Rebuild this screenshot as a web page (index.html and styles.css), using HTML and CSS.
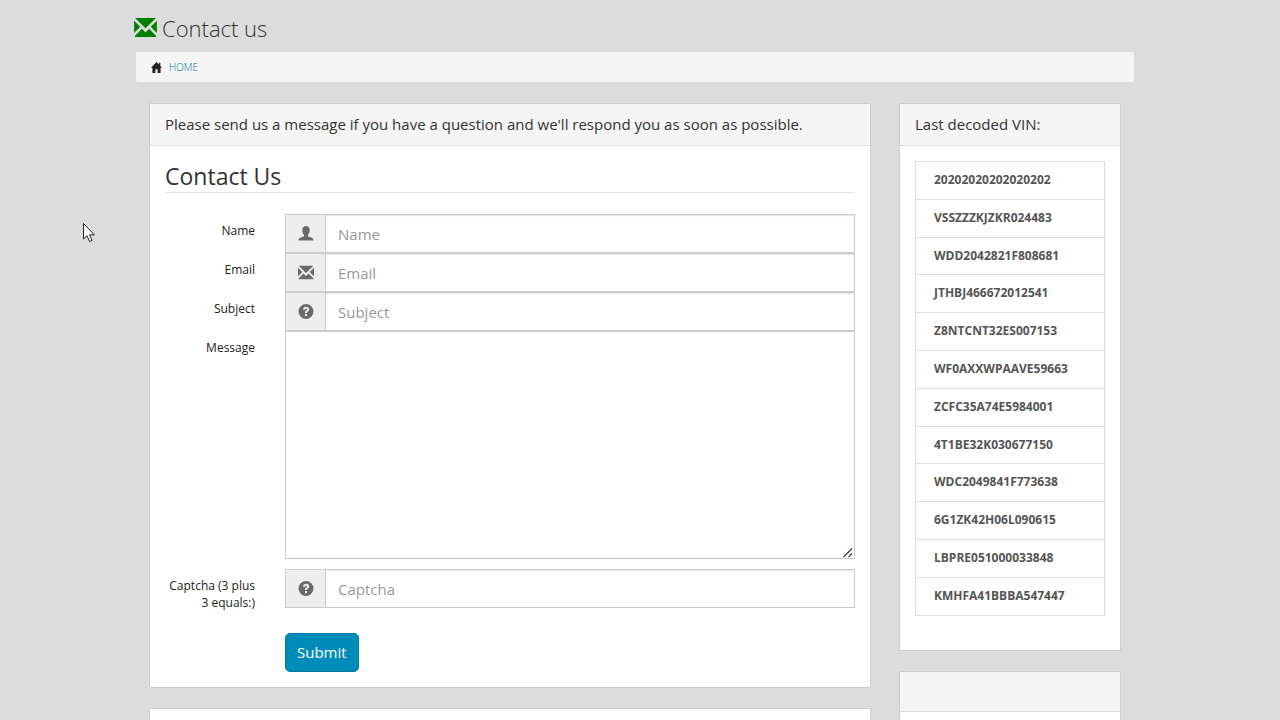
FILE: index.html
```html
<!DOCTYPE html>
<html lang="en">
<head>
<meta charset="utf-8">
<title>Contact us</title>
<link rel="stylesheet" href="styles.css">
</head>
<body>
<svg class="defs" aria-hidden="true">
  <symbol id="envelope" viewBox="0 0 24 20"><path d="M1 0H23L12 10.800zM0 2.800L6.500 9.300L0 15.800zM24 2.800V15.800L17.500 9.300zM8.200 11.400L12 15.200L15.800 11.400L23 18.600V20H1V18.600z"/></symbol>
  <symbol id="user" viewBox="0 0 16 16"><path d="M8 0C5.300 0 4 1.900 4 4.500C4 6.500 4.700 8.200 5.900 9.400V10.900L1.500 12.800C.4 13.300 0 14 0 15V15.500H16V15C16 14 15.600 13.300 14.500 12.800L10.100 10.900V9.400C11.300 8.200 12 6.500 12 4.500C12 1.900 10.700 0 8 0z"/></symbol>
  <symbol id="question" viewBox="0 0 16 16"><path fill-rule="evenodd" d="M8 0A8 8 0 1 1 8 16A8 8 0 1 1 8 0zM4.900 6.100H7.100C7.100 5.300 7.500 4.900 8.100 4.900C8.700 4.900 9.100 5.200 9.100 5.700C9.100 6.300 8.700 6.600 8.100 7C7.300 7.500 6.900 8.100 6.900 9.500H9C9 8.800 9.300 8.500 9.900 8.100C10.900 7.400 11.400 6.700 11.400 5.700C11.400 4 10.100 3 8.100 3C6.100 3 4.900 4.200 4.900 6.100zM6.900 10.700V12.900H9.100V10.700z"/></symbol>
</svg>

<div class="page">
  <header class="title">
    <svg class="title-icon" aria-hidden="true"><use href="#envelope"/></svg>
    <h1>Contact us</h1>
  </header>

  <nav class="breadcrumb" aria-label="Breadcrumb">
    <svg class="home-icon" viewBox="0 0 10 10" aria-hidden="true"><path d="M5 0L10 5.300H8.700V10H6V6.500H4V10H1.300V5.300H0zM7.200 .6H8.500V3.700L7.200 2.300z"/></svg>
    <a href="#">HOME</a>
  </nav>

  <div class="columns">
    <main class="column">
      <section class="panel">
        <div class="panel-heading">Please send us a message if you have a question and we'll respond you as soon as possible.</div>
        <form class="panel-body">
          <h2>Contact Us</h2>
          <div class="field">
            <label for="name">Name</label>
            <div class="group"><span class="addon"><svg class="icon" aria-hidden="true"><use href="#user"/></svg></span><input id="name" type="text" placeholder="Name"></div>
          </div>
          <div class="field">
            <label for="email">Email</label>
            <div class="group"><span class="addon"><svg class="icon" aria-hidden="true"><use href="#envelope"/></svg></span><input id="email" type="email" placeholder="Email"></div>
          </div>
          <div class="field">
            <label for="subject">Subject</label>
            <div class="group"><span class="addon"><svg class="icon" aria-hidden="true"><use href="#question"/></svg></span><input id="subject" type="text" placeholder="Subject"></div>
          </div>
          <div class="field message">
            <label for="message">Message</label>
            <div class="area">
              <textarea id="message" rows="10"></textarea>
              <svg class="grip" viewBox="0 0 10 10" aria-hidden="true"><path d="M0.500 9L9 .5M5.500 9L9 5.500"/></svg>
            </div>
          </div>
          <div class="field">
            <label for="captcha">Captcha (3 plus 3 equals:)</label>
            <div class="group"><span class="addon"><svg class="icon" aria-hidden="true"><use href="#question"/></svg></span><input id="captcha" type="text" placeholder="Captcha"></div>
          </div>
          <div class="field actions"><button type="submit">Submit</button></div>
        </form>
      </section>
      <section class="panel next"></section>
    </main>

    <aside class="column">
      <section class="panel vins">
        <div class="panel-heading">Last decoded VIN:</div>
        <ul>
          <li>20202020202020202</li>
          <li>VSSZZZKJZKR024483</li>
          <li>WDD2042821F808681</li>
          <li>JTHBJ466672012541</li>
          <li>Z8NTCNT32ES007153</li>
          <li>WF0AXXWPAAVE59663</li>
          <li>ZCFC35A74E5984001</li>
          <li>4T1BE32K030677150</li>
          <li>WDC2049841F773638</li>
          <li>6G1ZK42H06L090615</li>
          <li>LBPRE051000033848</li>
          <li>KMHFA41BBBA547447</li>
        </ul>
      </section>
      <section class="panel next"><div class="panel-heading"></div></section>
    </aside>
  </div>
</div>

<svg class="cursor" viewBox="0 0 12 20" aria-hidden="true"><path d="M.5 .5V16L4 12.700L6.500 18.500L9 17.400L6.600 11.800H11.300z"/></svg>
</body>
</html>
```
FILE: styles.css
```css
* { box-sizing: border-box; }

html { height: 100%; overflow: hidden; }

body {
  height: 100%;
  margin: 0;
  padding-right: 10px;
  overflow: hidden;
  background: #dcdcdc;
  color: #333;
  font-family: "Open Sans", sans-serif;
  font-size: 15px;
  line-height: 1.4;
}

.defs { display: none; }

.page {
  max-width: 998px;
  margin: 0 auto;
  padding-top: 12px;
}

.title {
  display: flex;
  align-items: center;
  gap: 5px;
  margin: 0 0 7px -2px;
}

.title-icon {
  width: 23px;
  height: 19px;
  margin-bottom: 3px;
  fill: #008000;
}

h1 {
  margin: 0;
  font-size: 22px;
  font-weight: 300;
  line-height: 33px;
}

.breadcrumb {
  display: flex;
  align-items: center;
  gap: 7px;
  padding: 8px 15px;
  border-radius: 2px;
  background: #f5f5f5;
  font-size: 10px;
  font-weight: 300;
}

.breadcrumb a {
  color: #00749c;
  text-decoration: none;
}

.home-icon {
  width: 11px;
  height: 11px;
  fill: #222;
}

.columns {
  display: grid;
  grid-template-columns: minmax(0, 722fr) minmax(0, 222fr);
  align-items: start;
  gap: 28px;
  margin: 21px 13px 0;
}

.column {
  display: flex;
  flex-direction: column;
  gap: 20px;
}

.panel {
  border: 1px solid #cdcdcd;
  border-radius: 2px;
  background: #fff;
}

.panel-heading {
  min-height: 40px;
  padding: 10px 15px;
  border-bottom: 1px solid #ddd;
  background: #f5f5f5;
}

.panel-body { padding: 15px; }

h2 {
  margin: 0 0 21px;
  border-bottom: 1px solid #e5e5e5;
  font-size: 23px;
  font-weight: 400;
  line-height: 31px;
}

.field {
  display: grid;
  grid-template-columns: 90px minmax(0, 1fr);
  align-items: start;
  column-gap: 30px;
}

label {
  padding-top: 9px;
  color: #222;
  font-size: 12px;
  text-align: right;
}

.group { display: flex; }

.addon {
  display: flex;
  flex: none;
  align-items: center;
  justify-content: center;
  width: 40px;
  border: 1px solid #ccc;
  border-right: 0;
  background: #eee;
}

.icon {
  width: 16px;
  height: 15px;
  fill: #6a6a6a;
}

input,
textarea {
  width: 100%;
  min-width: 0;
  margin: 0;
  padding: 8px 12px;
  border: 1px solid #ccc;
  border-radius: 0;
  outline: 0;
  background: #fff;
  color: #333;
  font: inherit;
}

input {
  height: 39px;
  box-shadow: inset 0 1px 1px #e6e6e6;
}

input::placeholder { color: #999; }

.area {
  position: relative;
  display: flex;
}

textarea {
  display: block;
  height: 228px;
  resize: none;
}

.grip {
  position: absolute;
  right: 2px;
  bottom: 1px;
  width: 10px;
  height: 10px;
  fill: none;
  stroke: #444;
  stroke-width: 1.3;
}

.message { margin-bottom: 10px; }

.actions { margin-top: 21px; }

button {
  grid-column: 2;
  justify-self: start;
  padding: 8px 11px;
  border: 1px solid #0079a1;
  border-radius: 5px;
  background: #008cba;
  color: #fff;
  font: inherit;
}

.next { min-height: 80px; }

.vins ul {
  margin: 15px 15px 34px;
  padding: 0;
  border: 1px solid #ddd;
  border-top: 0;
  list-style: none;
}

.vins li {
  padding: 10px 18px;
  border-top: 1px solid #ddd;
  color: #555;
  font-size: 12px;
  font-weight: 700;
}

.cursor {
  position: absolute;
  top: 223px;
  left: 83px;
  width: 12px;
  height: 20px;
  fill: #fff;
  stroke: #222;
}
```
